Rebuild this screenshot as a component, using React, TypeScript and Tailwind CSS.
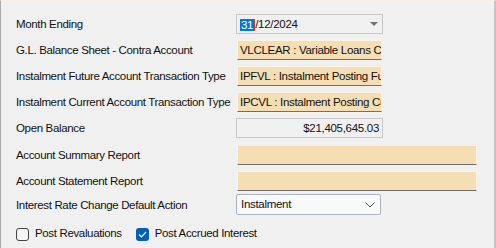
import React from "react";

const font = { fontFamily: '"Liberation Sans", Arial, sans-serif' };

function Label({ children }: { children: React.ReactNode }) {
  return (
    <div className="w-[220px] shrink-0 whitespace-nowrap pt-[2px] text-[11.5px] tracking-[-0.35px] text-[#111]">{children}</div>
  );
}

function PeachField({ text, wide }: { text?: string; wide?: boolean }) {
  return (
    <div
      className={`${wide ? "w-[240px]" : "w-[145px]"} h-[20px] bg-[#f5deb3] border-t border-l border-r border-t-[#fbf3e4] border-l-[#fbf3e4] border-r-[#fbf3e4] border-b border-b-[#6f6f6f] overflow-hidden whitespace-nowrap pl-[2px] text-[11.5px] tracking-[-0.3px] leading-[19px] text-[#111]`}
    >
      {text}
    </div>
  );
}

export default function App() {
  return (
    <div
      style={font}
      className="w-[496px] h-[248px] bg-[#f0f0f0] border-l border-l-[#a8a8a8] border-r-2 border-r-[#c4c4c4] border-t border-t-[#f6ece8] flex flex-col pl-[15px] select-none"
    >
      {/* Month ending */}
      <div className="flex items-center mt-[13px] h-[20px]">
        <Label>Month Ending</Label>
        <div className="w-[147px] h-[20px] border border-[#c8c8c8] bg-[#f0f0f0] flex items-center pl-[3px] pr-[4px] pt-[1px] text-[11.5px] tracking-[-0.3px] text-[#111]">
          <span className="bg-[#0078d7] text-white leading-[12px] px-[1px]">31</span>
          <span className="w-[1px] h-[12px] bg-[#d04010]" />
          <span>/12/2024</span>
          <span className="ml-auto">
            <svg width="8" height="5" viewBox="0 0 8 5">
              <path d="M0 0 H8 L4 4 Z" fill="#707070" />
            </svg>
          </span>
        </div>
      </div>

      <div className="flex items-center mt-[6px] h-[20px]">
        <Label>G.L. Balance Sheet - Contra Account</Label>
        <div className="ml-[1px]">
          <PeachField text="VLCLEAR : Variable Loans Clearing" />
        </div>
      </div>

      <div className="flex items-center mt-[6px] h-[20px]">
        <Label>Instalment Future Account Transaction Type</Label>
        <div className="ml-[1px]">
          <PeachField text="IPFVL : Instalment Posting Future" />
        </div>
      </div>

      <div className="flex items-center mt-[6px] h-[20px]">
        <Label>Instalment Current Account Transaction Type</Label>
        <div className="ml-[1px]">
          <PeachField text="IPCVL : Instalment Posting Current" />
        </div>
      </div>

      <div className="flex items-center mt-[6px] h-[20px]">
        <Label>Open Balance</Label>
        <div className="w-[147px] h-[20px] border border-[#c8c8c8] bg-[#f0f0f0] flex items-center justify-end pr-[3px] pt-[1px] text-[11.5px] tracking-[-0.3px] text-[#111]">
          $21,405,645.03
        </div>
      </div>

      <div className="flex items-center mt-[7px] h-[20px]">
        <Label>Account Summary Report</Label>
        <div className="ml-[1px]">
          <PeachField wide />
        </div>
      </div>

      <div className="flex items-center mt-[6px] h-[19px]">
        <Label>Account Statement Report</Label>
        <div className="ml-[1px]">
          <PeachField wide />
        </div>
      </div>

      <div className="flex items-center mt-[4px] h-[21px]">
        <Label>Interest Rate Change Default Action</Label>
        <div className="w-[145px] h-[21px] border border-[#a9b3bf] rounded-[2px] bg-[#f8f9fb] flex items-center pl-[4px] pr-[5px] pt-[1px] text-[11.5px] tracking-[-0.3px] text-[#111]">
          <span>Instalment</span>
          <span className="ml-auto">
            <svg width="10" height="6" viewBox="0 0 10 6">
              <path d="M0.5 0.5 L5 5 L9.5 0.5" fill="none" stroke="#555" strokeWidth="1" />
            </svg>
          </span>
        </div>
      </div>

      <div className="flex items-center mt-[12px] h-[14px] text-[11.5px] tracking-[-0.35px] text-[#111]">
        <div className="w-[13px] h-[13px] rounded-[3px] border border-[#444] bg-[#f6f6f6]" />
        <span className="ml-[6px]">Post Revaluations</span>
        <div className="ml-[14px] w-[13px] h-[13px] rounded-[3px] bg-[#005fb8] flex items-center justify-center">
          <svg width="9" height="7" viewBox="0 0 9 7">
            <path d="M1 3.5 L3.5 6 L8 1" fill="none" stroke="#fff" strokeWidth="1.2" />
          </svg>
        </div>
        <span className="ml-[6px]">Post Accrued Interest</span>
      </div>
    </div>
  );
}
